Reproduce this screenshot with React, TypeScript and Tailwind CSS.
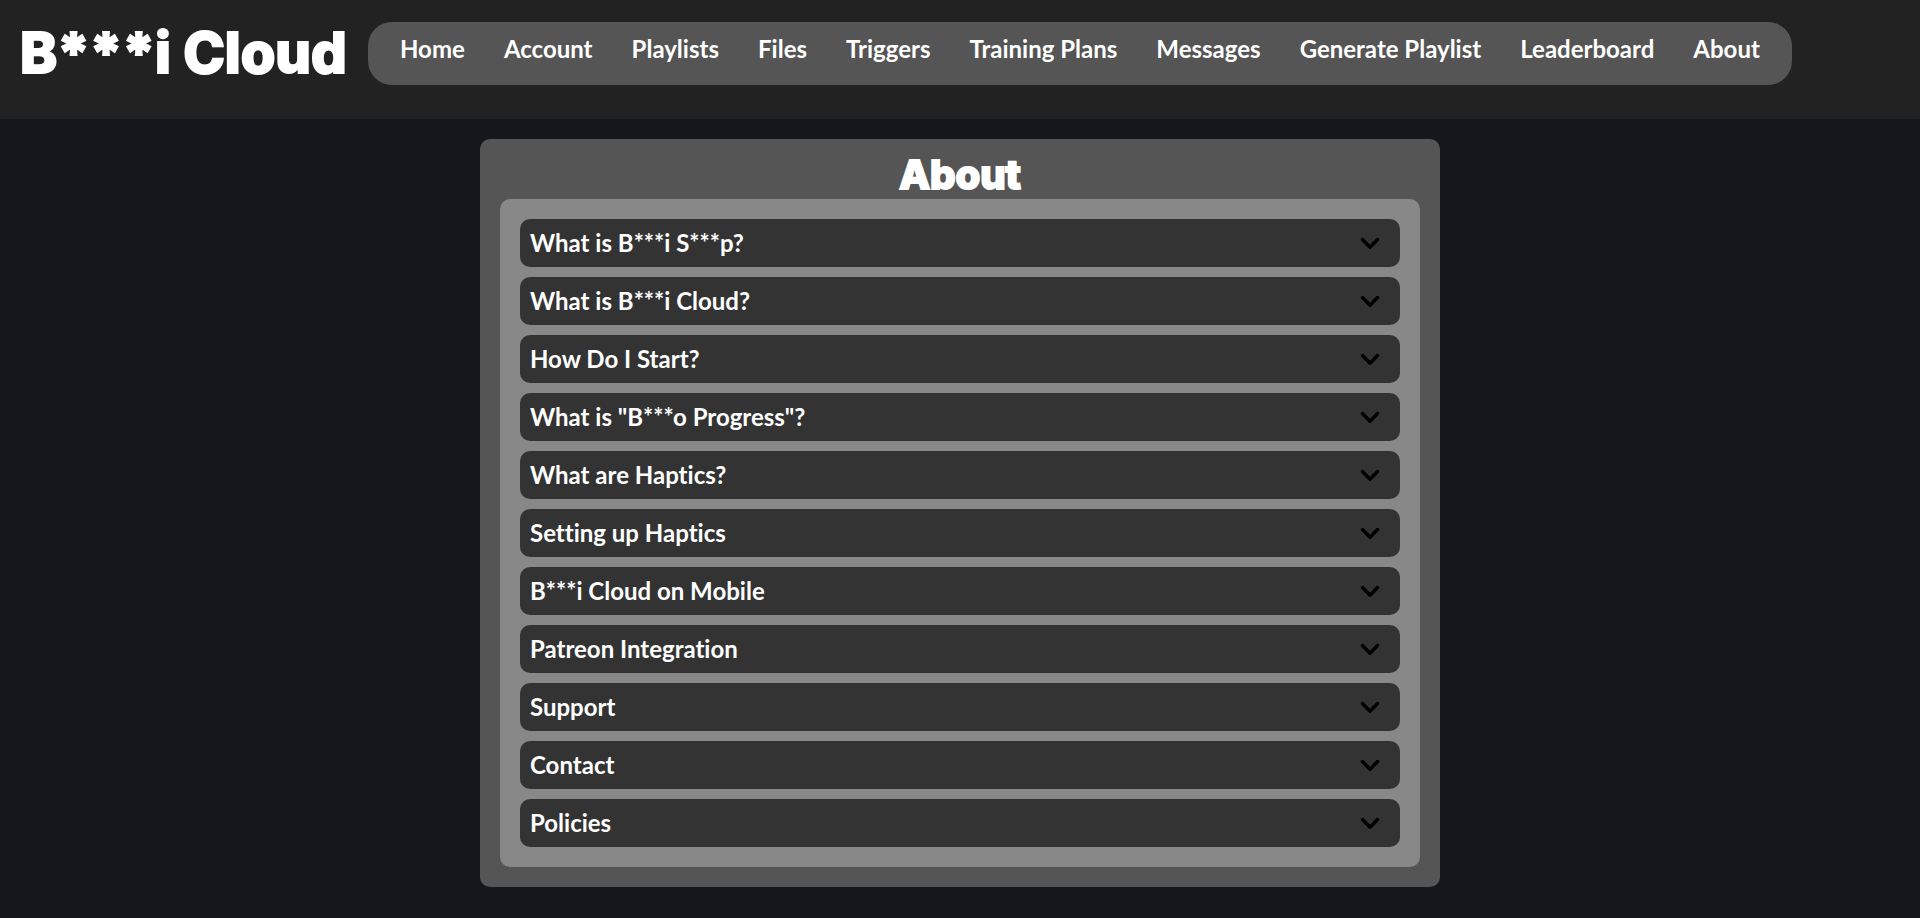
import React from "react";

const navItems: string[] = [
  "Home",
  "Account",
  "Playlists",
  "Files",
  "Triggers",
  "Training Plans",
  "Messages",
  "Generate Playlist",
  "Leaderboard",
  "About",
];

const topics: string[] = [
  "What is B***i S***p?",
  "What is B***i Cloud?",
  "How Do I Start?",
  'What is "B***o Progress"?',
  "What are Haptics?",
  "Setting up Haptics",
  "B***i Cloud on Mobile",
  "Patreon Integration",
  "Support",
  "Contact",
  "Policies",
];

function Chevron() {
  return (
    <svg viewBox="0 0 20 20" className="size-5 shrink-0" fill="none" aria-hidden="true">
      <path
        d="M2.5 6.5 10 14.2 17.5 6.5"
        stroke="#000"
        strokeWidth="3.4"
        strokeLinecap="round"
        strokeLinejoin="round"
      />
    </svg>
  );
}

export default function App() {
  return (
    <div className="min-h-screen bg-[#16171c] font-['Lato','Noto_Sans',sans-serif] text-white [font-variant-ligatures:none]">
      <header className="flex items-start bg-[#222222] pt-[22px] pr-32 pb-[34px] pl-5">
        <a
          href="#home"
          className="w-[348px] shrink-0 whitespace-nowrap font-['Inter',sans-serif] text-[56px] leading-[63px] font-extrabold [-webkit-text-stroke:2px_white]"
        >
          B***i Cloud
        </a>
        <nav className="h-[63px] flex-1 rounded-3xl bg-[#555555] px-8 pt-3">
          <ul className="flex justify-between">
            {navItems.map((item) => (
              <li key={item}>
                <a href="#" className="block whitespace-nowrap text-2xl leading-[30px] font-bold">
                  {item}
                </a>
              </li>
            ))}
          </ul>
        </nav>
      </header>

      <main className="mx-auto mt-5 w-1/2 rounded-[10px] bg-[#555555] px-5 pb-5">
        <h1 className="pt-3 text-center font-['Inter',sans-serif] text-[40px] leading-[48px] font-extrabold [-webkit-text-stroke:2px_white]">
          About
        </h1>
        <ul className="flex flex-col gap-2.5 rounded-[10px] bg-[#888888] p-5">
          {topics.map((topic) => (
            <li key={topic}>
              <button
                type="button"
                aria-expanded={false}
                className="flex h-12 w-full items-center justify-between rounded-[10px] bg-[#333333] pr-5 pl-2.5 text-left text-2xl font-bold"
              >
                {topic}
                <Chevron />
              </button>
            </li>
          ))}
        </ul>
      </main>
    </div>
  );
}
